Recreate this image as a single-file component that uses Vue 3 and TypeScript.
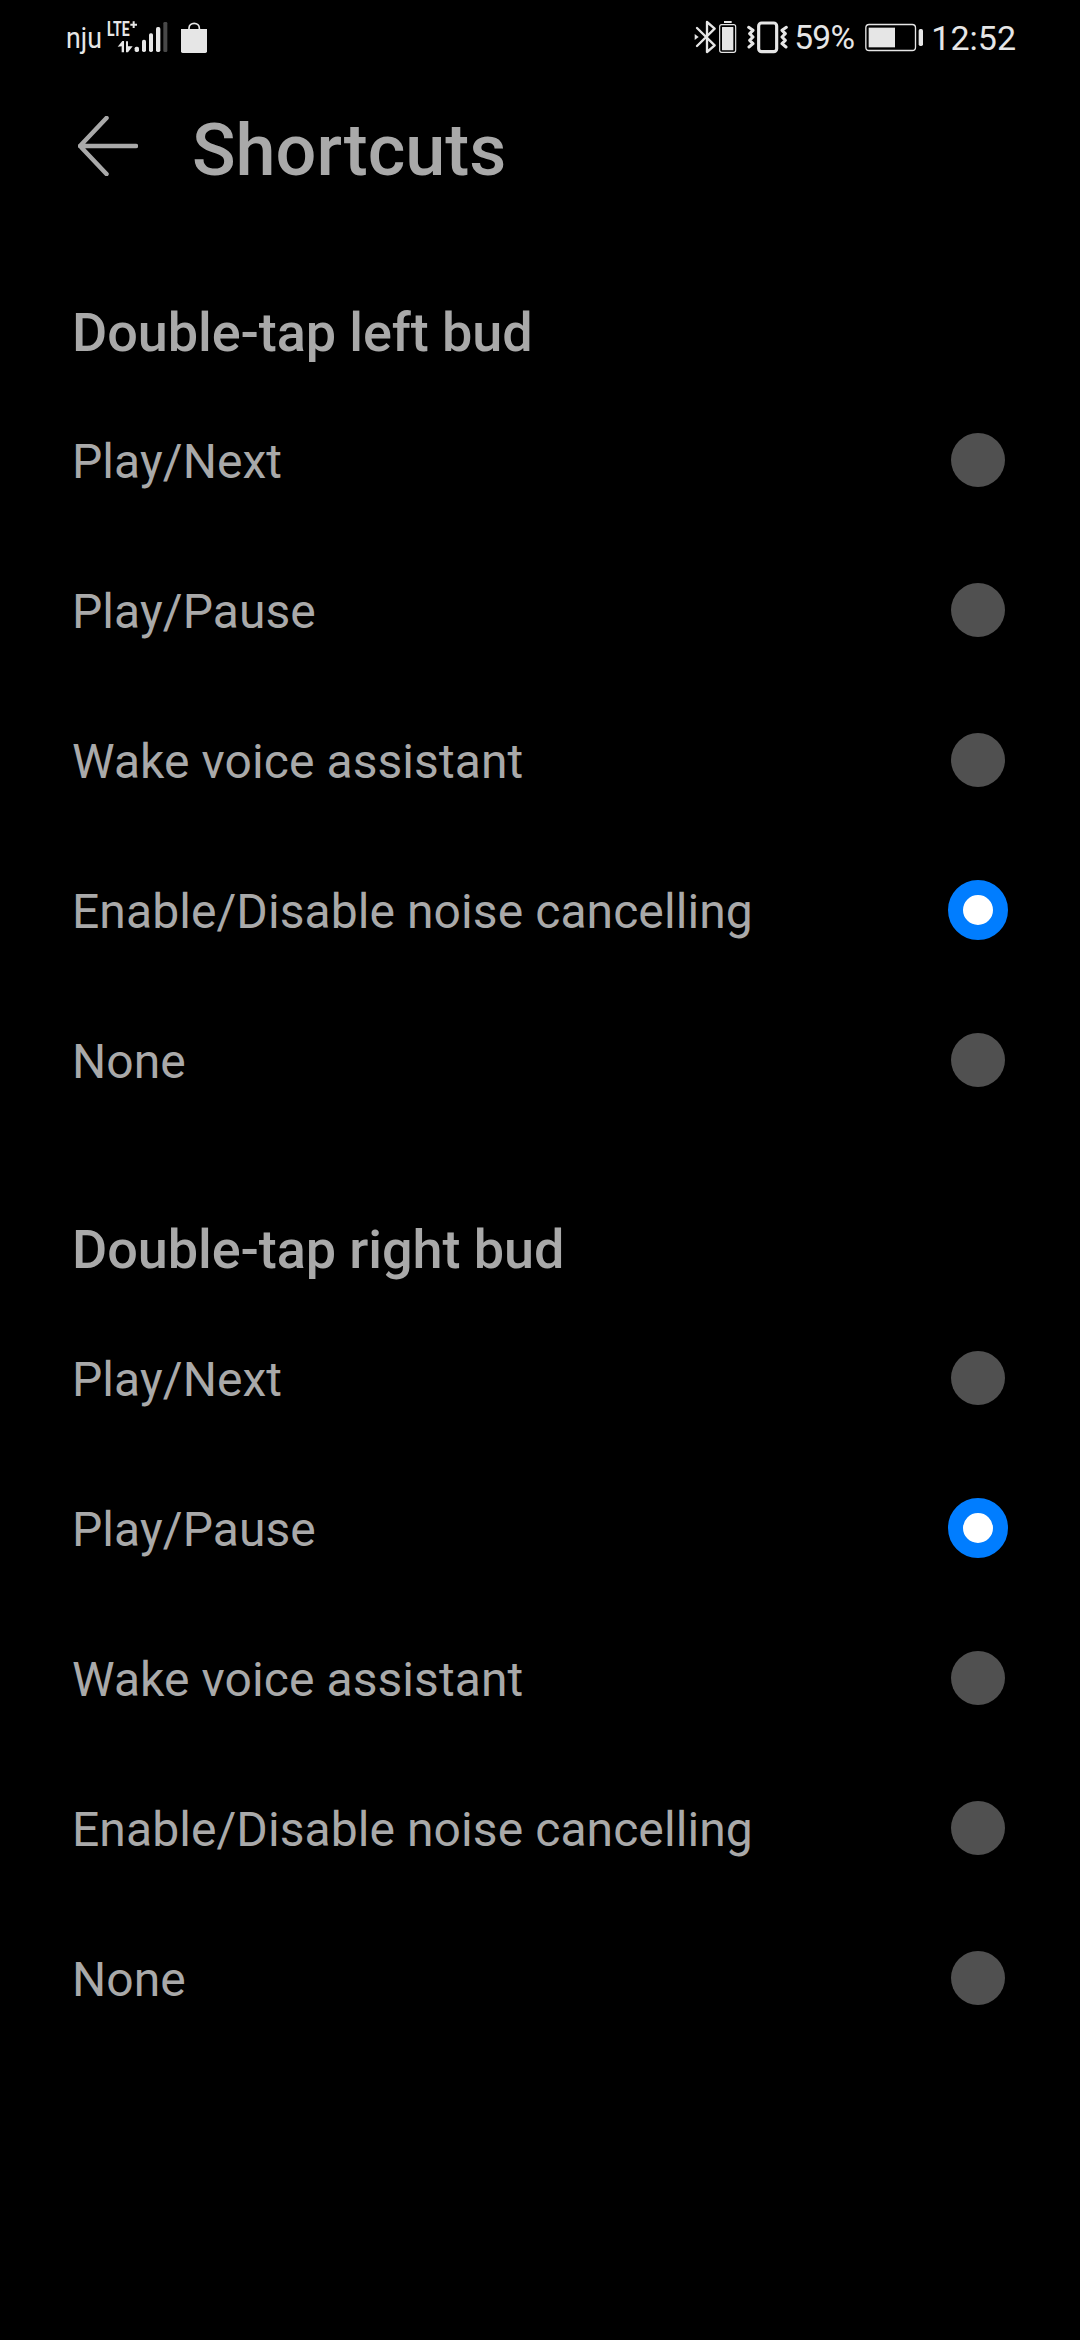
<script setup lang="ts">
import { ref } from 'vue'

type Side = 'left' | 'right'

interface Section {
  side: Side
  title: string
}

const options: string[] = [
  'Play/Next',
  'Play/Pause',
  'Wake voice assistant',
  'Enable/Disable noise cancelling',
  'None',
]

const sections: Section[] = [
  { side: 'left', title: 'Double-tap left bud' },
  { side: 'right', title: 'Double-tap right bud' },
]

const selected = ref<Record<Side, string>>({
  left: 'Enable/Disable noise cancelling',
  right: 'Play/Pause',
})
</script>

<template>
  <div class="screen">
    <div class="status">
      <span class="carrier">nju</span>
      <svg class="signal" viewBox="156 30 183 99" width="61" height="33">
        <text x="156" y="77" class="lte" textLength="68" lengthAdjust="spacingAndGlyphs">LTE</text>
        <path d="M226 44h20M236 34v20" class="stroke" stroke-width="6" />
        <path d="M188 110L202 93H207V127H200V109ZM213 94H219V109H233L219 127H213Z" class="fill" />
        <rect x="239" y="110" width="13" height="16" rx="5" class="fill" />
        <rect x="261" y="89" width="12" height="37" rx="5" class="fill" />
        <rect x="282" y="70" width="12" height="56" rx="5" class="fill" />
        <rect x="303" y="51" width="13" height="75" rx="5" class="fill" />
        <rect x="325" y="36" width="12" height="90" rx="4" class="dim" />
      </svg>
      <svg class="bag" viewBox="378 33 78 96" width="26" height="32">
        <path d="M378 57H456V124Q456 129 451 129H383Q378 129 378 124Z" class="fill" />
        <path d="M402 58V54A15.500 14 0 0 1 433 54V58" class="stroke" stroke-width="5" />
      </svg>
      <span class="spacer"></span>
      <svg class="bluetooth" viewBox="39 30 69 102" width="23" height="34">
        <path d="M48 54L101 106L78 126V36L101 56L48 108" class="stroke" stroke-width="7" stroke-linejoin="round" stroke-linecap="round" />
        <path d="M41 72L53 81L41 90Z" class="fill" />
      </svg>
      <svg class="buds" viewBox="111 30 57 102" width="19" height="34">
        <rect x="129" y="33" width="23" height="6" class="fill" />
        <rect x="116" y="44" width="48" height="83" rx="6" class="stroke" stroke-width="3.500" />
        <rect x="123" y="51" width="34" height="70" rx="1" class="fill" />
      </svg>
      <svg class="vibrate" viewBox="198 30 123 102" width="41" height="34">
        <rect x="233" y="39" width="54" height="86" rx="9" class="stroke" stroke-width="9.500" />
        <path d="M203 52L216 61L206 71L216 81L206 91L216 101L204 111M316 52L303 61L313 71L303 81L313 91L303 101L315 111" class="stroke" stroke-width="9" stroke-linejoin="round" stroke-linecap="round" />
      </svg>
      <span class="percent">59%</span>
      <svg class="battery" viewBox="42 36 174 93" width="58" height="31">
        <rect x="44.500" y="43.500" width="149" height="78" rx="10" class="stroke" stroke-width="4" />
        <rect x="53" y="53" width="79" height="59" class="fill" />
        <rect x="203" y="57" width="13" height="51" rx="5" class="fill" />
      </svg>
      <span class="clock">12:52</span>
    </div>

    <header class="bar">
      <svg class="back" viewBox="0 0 60 60" width="60" height="60">
        <path d="M28.500 2L2 30L28.500 58M2 30H58" />
      </svg>
      <h1>Shortcuts</h1>
    </header>

    <section v-for="section in sections" :key="section.side">
      <h2>{{ section.title }}</h2>
      <label v-for="option in options" :key="option" class="row">
        <span class="label">{{ option }}</span>
        <input v-model="selected[section.side]" type="radio" :name="section.side" :value="option" class="radio" />
      </label>
    </section>
  </div>
</template>

<style>
body {
  margin: 0;
  background: #000;
}
</style>

<style scoped>
.screen {
  box-sizing: border-box;
  width: 1080px;
  height: 2340px;
  overflow: hidden;
  background: #000;
  color: #a9a9a9;
  font-family: Roboto, 'Liberation Sans', sans-serif;
}

.status {
  box-sizing: border-box;
  display: flex;
  align-items: center;
  height: 73px;
  padding: 0 64px 0 66px;
  color: #e6e6e6;
  font-size: 34px;
  line-height: 40px;
  white-space: nowrap;
}

.status svg {
  flex: none;
  overflow: visible;
}

.spacer {
  flex: 1;
}

.carrier {
  width: 41px;
  padding-top: 2px;
  font-size: 30px;
  transform: scaleX(0.89);
  transform-origin: left;
}

.lte {
  fill: #e6e6e6;
  font-size: 60px;
  font-weight: 700;
}

.fill {
  fill: #e6e6e6;
}

.dim {
  fill: #484848;
}

.stroke {
  fill: none;
  stroke: #e6e6e6;
}

.bag {
  margin-left: 13px;
}

.buds {
  margin-left: 1px;
}

.vibrate {
  margin-left: 10px;
}

.percent {
  width: 71px;
  margin-left: 6px;
  padding-top: 3px;
  font-size: 33.5px;
  letter-spacing: -0.8px;
}

.battery {
  margin-top: 2px;
}

.clock {
  margin-left: 8px;
  padding-top: 3px;
}

.bar {
  display: flex;
  align-items: center;
  height: 144px;
  padding-left: 78px;
}

.back {
  margin: 1px 0 -1px;
}

.back path {
  fill: none;
  stroke: #a9a9a9;
  stroke-width: 4.500;
  stroke-linecap: round;
  stroke-linejoin: round;
}

h1 {
  margin: 12px 0 0 54px;
  font-size: 72px;
  font-weight: 500;
  line-height: 84px;
}

h2 {
  box-sizing: border-box;
  height: 168px;
  margin: 0;
  padding: 83px 72px 0;
  font-size: 54px;
  font-weight: 500;
  line-height: 64px;
  letter-spacing: -0.08px;
}

section:first-of-type h2 {
  padding-top: 84px;
}

.row {
  box-sizing: border-box;
  display: flex;
  align-items: center;
  justify-content: space-between;
  height: 150px;
  padding: 0 72px;
}

.label {
  padding-top: 4px;
  font-size: 48px;
  line-height: 56px;
  letter-spacing: 0.08px;
}

.radio {
  appearance: none;
  box-sizing: border-box;
  flex: none;
  width: 54px;
  height: 54px;
  margin: 0 3px;
  border-radius: 50%;
  background: #505050;
}

.radio:checked {
  width: 60px;
  height: 60px;
  margin: 0;
  border: 15px solid #007dff;
  background: #fff;
}
</style>
